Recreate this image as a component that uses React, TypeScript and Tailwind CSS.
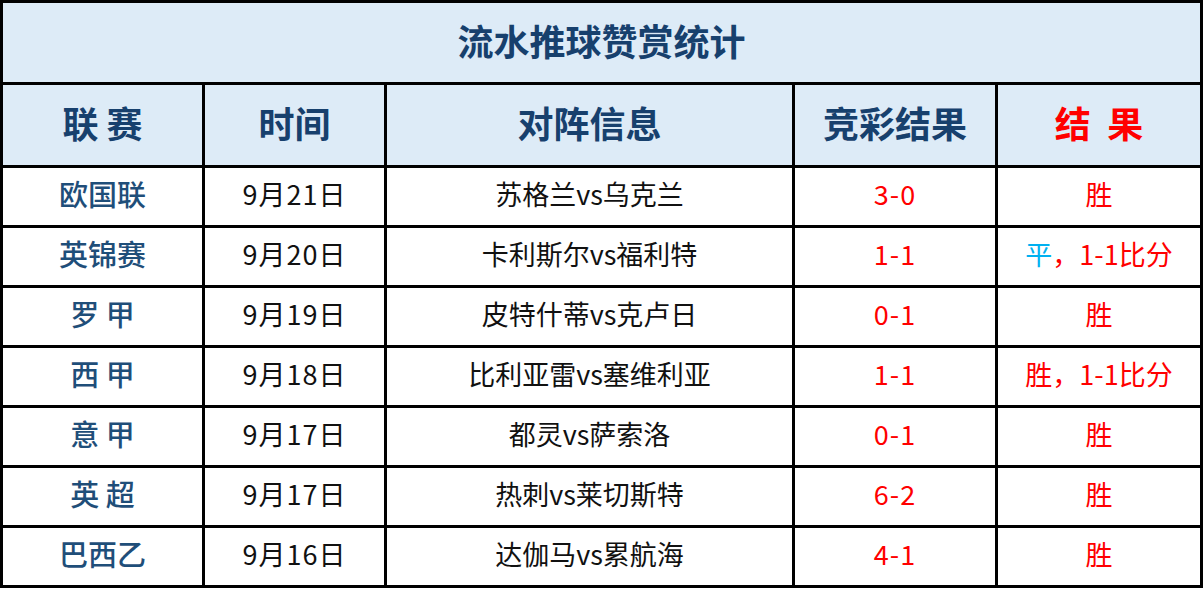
import React from "react";

type Row = {
  league: string;
  date: string;
  match: string;
  score: string;
  result: React.ReactNode;
};

const ROWS: Row[] = [
  { league: "欧国联", date: "9月21日", match: "苏格兰vs乌克兰", score: "3-0", result: "胜" },
  {
    league: "英锦赛",
    date: "9月20日",
    match: "卡利斯尔vs福利特",
    score: "1-1",
    result: (
      <>
        <span className="text-[#00b0f0]">平</span>，1-1比分
      </>
    ),
  },
  { league: "罗 甲", date: "9月19日", match: "皮特什蒂vs克卢日", score: "0-1", result: "胜" },
  { league: "西 甲", date: "9月18日", match: "比利亚雷vs塞维利亚", score: "1-1", result: "胜，1-1比分" },
  { league: "意 甲", date: "9月17日", match: "都灵vs萨索洛", score: "0-1", result: "胜" },
  { league: "英 超", date: "9月17日", match: "热刺vs莱切斯特", score: "6-2", result: "胜" },
  { league: "巴西乙", date: "9月16日", match: "达伽马vs累航海", score: "4-1", result: "胜" },
];

const cell = "bg-white flex items-center justify-center h-[57px] pb-[5px]";
const head = "bg-[#ddebf7] flex items-center justify-center h-[80px] pb-[6px] text-[36px] font-bold";

export default function App() {
  return (
    <div
      className="w-[1203px] h-[589px] bg-white"
      style={{ fontFamily: '"Noto Sans CJK SC", "Noto Sans", sans-serif' }}
    >
      <div className="grid grid-cols-[199px_179px_405px_200px_202px] gap-[3px] p-[3px] bg-black w-[1203px]">
        {/* 标题 */}
        <div className="col-span-5 bg-[#ddebf7] h-[79px] pb-[6px] flex items-center justify-center text-[36px] font-bold text-[#17406d]">
          流水推球赞赏统计
        </div>

        <div className={`${head} text-[#17406d]`}>联 赛</div>
        <div className={`${head} text-[#17406d]`}>时间</div>
        <div className={`${head} text-[#17406d]`}>对阵信息</div>
        <div className={`${head} text-[#17406d]`}>竞彩结果</div>
        <div className={`${head} text-[#ff0000]`}>结&nbsp;&nbsp;果</div>

        {ROWS.map((r, i) => (
          <React.Fragment key={i}>
            <div className={`${cell} text-[29px] font-medium text-[#1f4e79]`}>{r.league}</div>
            <div className={`${cell} text-[27px] tracking-[1px] text-[#111]`}>{r.date}</div>
            <div className={`${cell} text-[27px] text-[#111]`}>{r.match}</div>
            <div className={`${cell} text-[27px] tracking-[1px] text-[#ff0000]`}>{r.score}</div>
            <div className={`${cell} text-[27px] text-[#ff0000]`}>{r.result}</div>
          </React.Fragment>
        ))}
      </div>
    </div>
  );
}
